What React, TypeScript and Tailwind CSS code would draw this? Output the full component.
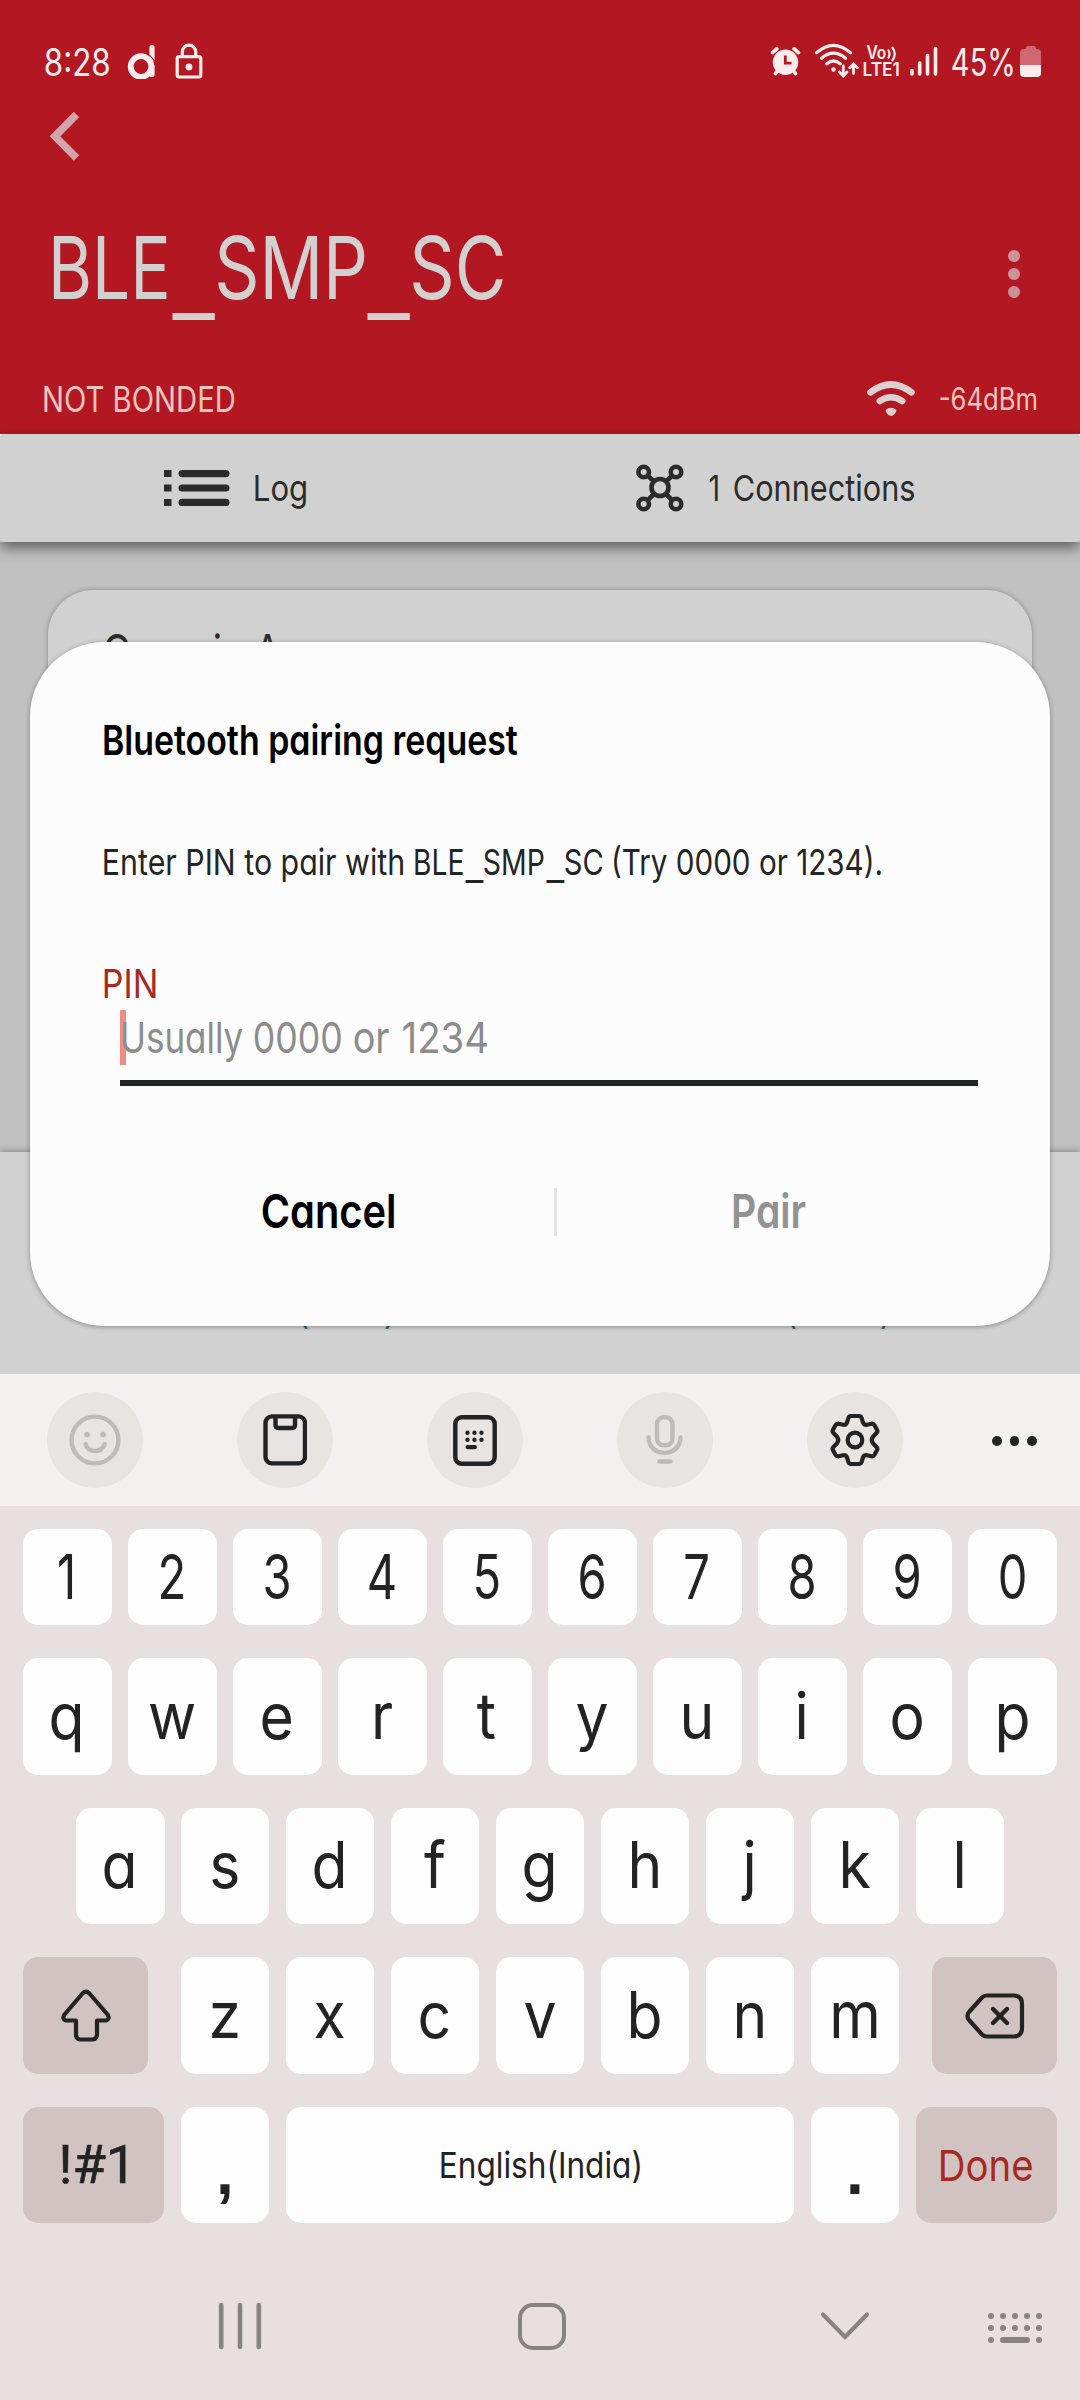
import { useLayoutEffect, useRef, useState, type ReactNode } from 'react';

/** Text condensed horizontally so that its ink fills exactly `w` pixels. */
function Fit({ w, children, className = '' }: { w: number; children: string; className?: string }) {
  const ref = useRef<HTMLSpanElement>(null);
  const [transform, setTransform] = useState('none');
  useLayoutEffect(() => {
    const el = ref.current;
    if (!el) return;
    const cs = getComputedStyle(el);
    const ctx = document.createElement('canvas').getContext('2d');
    if (!ctx) return;
    ctx.font = `${cs.fontWeight} ${cs.fontSize} ${cs.fontFamily}`;
    const m = ctx.measureText(children);
    const extra = el.offsetWidth - m.width;
    const ink = m.actualBoundingBoxLeft + m.actualBoundingBoxRight + extra;
    const s = w / ink;
    setTransform(`translateX(${m.actualBoundingBoxLeft * s + 0.4}px) scaleX(${s})`);
  }, [w, children]);
  return (
    <span className={`block shrink-0 ${className}`} style={{ width: w }}>
      <span ref={ref} className="inline-block origin-left whitespace-pre" style={{ transform }}>
        {children}
      </span>
    </span>
  );
}

function Key({ children, className = 'w-[88.5px] bg-[#fdfdfd]' }: { children: ReactNode; className?: string }) {
  return <div className={`flex h-full shrink-0 items-center justify-center rounded-[15px] ${className}`}>{children}</div>;
}

function Letter({ children }: { children: string }) {
  return (
    <Key>
      <span className="-mt-[2px] -ml-[1px] block scale-x-[0.92] text-[64px] leading-none">{children}</span>
    </Key>
  );
}

function StatusBar() {
  return (
    <div className="flex h-[98px] items-start pt-[43px] pl-[45px] text-[#ffecec]">
      <Fit w={64} className="text-[38px] leading-[38px]">8:28</Fit>
      <svg className="ml-[18px]" width="30" height="36" viewBox="0 0 30 36" fill="none" stroke="currentColor" strokeLinecap="round">
        <circle cx="14" cy="23.5" r="10.3" strokeWidth="5.8" />
        <path d="M25 4.6V16M25 23V31.5" strokeWidth="5.2" />
        <path d="M20 10.5Q25 13.500 27.4 18" stroke="#b31822" strokeWidth="1.2" />
      </svg>
      <svg className="ml-[18px]" width="28" height="36" viewBox="0 0 28 36" fill="none" stroke="currentColor" strokeWidth="3.2">
        <rect x="2.2" y="13.7" width="23.6" height="20.3" rx="2" />
        <path d="M7.3 13V8.8A6.7 6.7 0 0 1 20.7 8.8V13" />
        <circle cx="14" cy="24" r="3.4" fill="currentColor" stroke="none" />
      </svg>
      <svg className="ml-[567px] mt-[4px]" width="32" height="30" viewBox="0 0 32 30">
        <circle cx="15.5" cy="15.3" r="12.7" fill="currentColor" />
        <path d="M2.6 5.6L6.8 1.8M28.4 5.6L24.2 1.8M5.5 26.5L8 23M25.5 26.5L23 23" stroke="currentColor" strokeWidth="3.8" strokeLinecap="round" />
        <path d="M15.3 8.5V16.2H21.5" fill="none" stroke="#b31822" strokeWidth="2.8" />
      </svg>
      <svg className="ml-[13px]" width="44" height="36" viewBox="0 0 44 36" fill="none" stroke="currentColor" strokeWidth="3.2" strokeLinecap="round">
        <path d="M1.5 9.8Q18.5 -5.2 35.5 9.8M6.5 15.2Q18.5 5.2 30.5 15.2M11.8 20.8Q18.5 15.2 25.2 20.8" />
        <circle cx="18.5" cy="26.5" r="2.2" fill="currentColor" stroke="none" />
        <path d="M28.3 23V32.5M24.5 29L28.3 33L32 29M38.5 30.5V21.5M34.8 24.8L38.5 21L42.3 24.8" strokeWidth="2.8" />
      </svg>
      <div className="ml-[4px] flex h-[36px] w-[38px] flex-col font-semibold">
        <div className="flex pl-[3px]">
          <Fit w={20} className="mt-[1px] text-[18px] leading-[18px]">Vo</Fit>
          <svg className="mt-[3px]" width="12" height="16" viewBox="0 0 12 16" fill="none" stroke="currentColor" strokeWidth="2.2">
            <path d="M2 3.5Q5 8 2 12.5M6 1Q11.5 8 6 15" />
          </svg>
        </div>
        <Fit w={36} className="-mt-[1px] text-[18px] leading-[18px]">LTE1</Fit>
      </div>
      <svg className="ml-[9px] mt-[3px]" width="28" height="31" viewBox="0 0 28 31" stroke="currentColor" strokeWidth="3.6" strokeLinecap="round">
        <path d="M2 24.5V28M9.7 17V28M17.5 9.5V28M25.5 2.5V28" />
      </svg>
      <Fit w={61} className="ml-[14px] text-[38px] leading-[38px]">45%</Fit>
      <div className="ml-[7px] mt-[3px] flex w-[21px] flex-col items-center">
        <div className="h-[3px] w-[10px] rounded-t-[2px] bg-[#cf6870]" />
        <div className="h-[16px] w-full rounded-t-[4px] bg-[#cf6870]" />
        <div className="h-[12px] w-full rounded-b-[4px] bg-[#ffecec]" />
      </div>
    </div>
  );
}

function Header() {
  return (
    <header className="h-[434px] bg-[#b31822] text-[#d3d0d0]">
      <StatusBar />
      <svg className="mt-[13px] ml-[49px]" width="32" height="51" viewBox="0 0 32 51" fill="none" stroke="#d0a5ac" strokeWidth="7.6">
        <path d="M27.5 3.5L6 25.3L27.5 47" />
      </svg>
      <div className="mt-[56px] flex h-[100px] items-center pl-[53px]">
        <div className="flex text-[87px] leading-[100px]">
          <Fit w={113}>BLE</Fit>
          <Fit w={43} className="ml-[6px] translate-y-[14px]">_</Fit>
          <Fit w={147} className="ml-[2px]">SMP</Fit>
          <Fit w={43} className="ml-[3px] translate-y-[14px]">_</Fit>
          <Fit w={90} className="ml-[2px]">SC</Fit>
        </div>
        <div className="mt-[11px] ml-[506px] flex flex-col gap-[6px]">
          <i className="size-3 rounded-full bg-[#cb9298]" />
          <i className="size-3 rounded-full bg-[#cb9298]" />
          <i className="size-3 rounded-full bg-[#cb9298]" />
        </div>
      </div>
      <div className="mt-[61px] flex h-[40px] items-center pl-[44px]">
        <Fit w={190} className="text-[36px] leading-[40px] text-[#ecc4be]">NOT BONDED</Fit>
        <svg className="ml-[633px]" width="48" height="36" viewBox="0 0 48 36" fill="none" stroke="#dcd0d1" strokeLinecap="round" strokeWidth="6.6">
          <path d="M3.5 11.3Q24 -4.3 44.5 11.3M12.8 20Q24 12.5 35.2 20" />
          <path d="M18.5 29Q24 24.5 29.500 29Q28.500 34 24 35Q19.500 34 18.500 29Z" fill="#dcd0d1" stroke="none" />
        </svg>
        <Fit w={96} className="ml-[25px] text-[31px] leading-[40px] text-[#ecc4be]">-64dBm</Fit>
      </div>
    </header>
  );
}

function Tabs() {
  return (
    <div className="relative z-10 flex h-[108px] items-center rounded-[4px] bg-[#d1d1d1] pl-[164px] text-[36px] leading-[40px] text-[#2b2b2b] shadow-[0_6px_14px_rgba(0,0,0,0.5)]">
      <svg width="66" height="38" viewBox="0 0 66 38" fill="currentColor">
        <rect y="1" width="7.500" height="7" /><rect y="15.500" width="7.500" height="7" /><rect y="30" width="7.500" height="7" />
        <rect x="14.500" y="1" width="51" height="7.200" rx="3.600" /><rect x="14.500" y="15.400" width="51" height="7.200" rx="3.600" /><rect x="14.500" y="29.800" width="51" height="7.200" rx="3.600" />
      </svg>
      <Fit w={51} className="ml-[25px]">Log</Fit>
      <svg className="ml-[330px]" width="48" height="48" viewBox="0 0 48 48" fill="none" stroke="currentColor" strokeWidth="4.600">
        <circle cx="24" cy="23.500" r="8.500" />
        <circle cx="7.700" cy="8" r="5.300" /><circle cx="40" cy="8" r="5.300" />
        <circle cx="7.700" cy="40" r="5.300" /><circle cx="40" cy="40" r="5.300" />
        <path d="M11.500 11.500L18 17.500M36.300 11.500L30 17.500M11.500 36.300L18 30M36.300 36.300L30 30" />
      </svg>
      <Fit w={9} className="ml-[25px]">1</Fit>
      <Fit w={180} className="ml-[16px]">Connections</Fit>
    </div>
  );
}

function Dialog() {
  return (
    <section className="absolute top-[642px] left-[30px] z-20 flex h-[684px] w-[1020px] flex-col rounded-[74px] bg-[#fcfcfc] text-[#232524] shadow-[0_1px_5px_rgba(0,0,0,0.35)]">
      <Fit w={413} className="mt-[76px] ml-[74px] text-[41px] leading-[44px] font-semibold text-black">Bluetooth pairing request</Fit>
      <div className="mt-[80px] ml-[74px] flex text-[36px] leading-[40px]">
        <Fit w={299}>Enter PIN to pair with</Fit>
        <Fit w={48} className="ml-[12px]">BLE</Fit>
        <Fit w={18} className="ml-[2px] translate-y-[5px]">_</Fit>
        <Fit w={60} className="ml-[1px]">SMP</Fit>
        <Fit w={18} className="ml-[2px] translate-y-[5px]">_</Fit>
        <Fit w={37} className="ml-[1px]">SC</Fit>
        <Fit w={268} className="ml-[11px]">(Try 0000 or 1234).</Fit>
      </div>
      <Fit w={51} className="mt-[80px] ml-[74px] text-[40px] leading-[44px] text-[#a8291f]">PIN</Fit>
      <div className="mt-[4px] ml-[90px] flex h-[76px] w-[858px] items-start border-b-[6px] border-[#232524] text-[43px] leading-[55px] text-[#8c8c8c]">
        <div className="h-[55px] w-[6px] bg-[#ec8d84]" />
        <Fit w={121} className="-ml-[4px]">Usually</Fit>
        <Fit w={87} className="ml-[11px]">0000</Fit>
        <Fit w={35} className="ml-[13px]">or</Fit>
        <Fit w={84} className="ml-[14px]">1234</Fit>
      </div>
      <div className="mt-[100px] flex h-[50px] items-center text-[47px] leading-[50px]">
        <Fit w={132} className="ml-[232px] font-semibold text-black">Cancel</Fit>
        <div className="mt-[2px] ml-[160px] h-[48px] w-[3px] bg-[#e4e4e4]" />
        <Fit w={72} className="ml-[176px] font-semibold text-[#929292]">Pair</Fit>
      </div>
    </section>
  );
}

function Content() {
  return (
    <main className="flex h-[832px] flex-col bg-[#c1c1c1]">
      <div className="mx-[48px] mt-[48px] h-[562px] overflow-hidden rounded-t-[45px] bg-[#d1d1d1] pt-[42px] pl-[56px] shadow-[0_0_5px_rgba(0,0,0,0.3)]">
        <Fit w={280} className="text-[48px] leading-[40px] text-[#2b2b2b]">Generic Access</Fit>
      </div>
      <div className="relative flex h-[222px] bg-[#d1d1d1] pt-[147px] pl-[298px] text-[30px] leading-[30px] shadow-[0_-2px_6px_rgba(0,0,0,0.25)]">
        <span className="flex w-[97px] justify-between text-[#27628a]"><span>(</span><span>)</span></span>
        <span className="ml-[391px] flex w-[105px] justify-between text-[#555]"><span>(</span><span>)</span></span>
      </div>
    </main>
  );
}

function Round({ children }: { children: ReactNode }) {
  return <div className="flex size-24 items-center justify-center rounded-full bg-[#e8e4e2]">{children}</div>;
}

function Toolbar() {
  return (
    <div className="relative flex h-[132px] items-center gap-[94px] bg-[#f4f0ef] pl-[47px] text-[#232323]">
      <Round>
        <svg width="52" height="52" viewBox="0 0 52 52" fill="none" stroke="#bfbbb9" strokeWidth="4.400" strokeLinecap="round">
          <circle cx="26" cy="26" r="23.400" />
          <path d="M16.500 30Q18.500 37 26 37Q33.500 37 35.700 30" />
          <circle cx="18" cy="20.600" r="2.900" fill="#bfbbb9" stroke="none" /><circle cx="34" cy="20.600" r="2.900" fill="#bfbbb9" stroke="none" />
        </svg>
      </Round>
      <Round>
        <svg width="44" height="52" viewBox="0 0 44 52" fill="none" stroke="currentColor" strokeWidth="4.400">
          <rect x="2.500" y="2.400" width="39.500" height="47" rx="6.500" />
          <path d="M12.500 3V11Q12.500 14 15.500 14H29Q32 14 32 11V3" />
        </svg>
      </Round>
      <Round>
        <svg width="44" height="52" viewBox="0 0 44 52" fill="currentColor">
          <rect x="2.300" y="3.300" width="39.400" height="46.500" rx="6.500" fill="none" stroke="currentColor" strokeWidth="4.400" />
          {[14.5, 21.5, 28.5].map((x) => (
            <g key={x}><circle cx={x} cy="18.800" r="2.200" /><circle cx={x} cy="25.800" r="2.200" /></g>
          ))}
          <rect x="12.500" y="31" width="11.500" height="4.200" rx="2.100" />
        </svg>
      </Round>
      <Round>
        <svg width="40" height="52" viewBox="0 0 40 52" fill="none" stroke="#bfbbb9" strokeWidth="4.400" strokeLinecap="round">
          <rect x="12" y="3.300" width="15.500" height="28" rx="6.500" />
          <path d="M3.500 23.500C4 44 35 44 35.500 23.500M14.500 47.500H25.500" />
        </svg>
      </Round>
      <Round>
        <svg width="52" height="54" viewBox="-26 -27 52 54" fill="none" stroke="currentColor" strokeWidth="4.200" strokeLinejoin="round">
          <path d="M-4 -24H4Q6 -24 6.600 -22L8 -17.500Q9 -14.800 12 -15.300L16.500 -16.300Q18.500 -16.500 19.500 -14.800L22 -10.300Q23 -8.500 21.500 -7L18 -3.300Q15.500 0 18 3.300L21.500 7Q23 8.500 22 10.300L19.500 14.800Q18.500 16.500 16.500 16.300L12 15.300Q9 14.800 8 17.500L6.600 22Q6 24 4 24H-4Q-6 24 -6.600 22L-8 17.500Q-9 14.800 -12 15.300L-16.500 16.300Q-18.500 16.500 -19.500 14.800L-22 10.300Q-23 8.500 -21.500 7L-18 3.300Q-15.500 0 -18 -3.300L-21.500 -7Q-23 -8.500 -22 -10.300L-19.500 -14.800Q-18.500 -16.500 -16.500 -16.300L-12 -15.300Q-9 -14.800 -8 -17.500L-6.600 -22Q-6 -24 -4 -24Z" />
          <circle r="7.300" />
        </svg>
      </Round>
      <div className="-ml-[5px] mt-[2px] flex gap-[8px]">
        <i className="size-[9.5px] rounded-full bg-current" />
        <i className="size-[9.5px] rounded-full bg-current" />
        <i className="size-[9.5px] rounded-full bg-current" />
      </div>
    </div>
  );
}

function Keyboard() {
  return (
    <div className="flex h-[894px] flex-col bg-[#e7dfe0] pt-[23px] text-[#232323]">
      <div className="flex h-[96px] justify-between px-[23px]">
        {'1234567890'.split('').map((d) => (
          <Key key={d}><span className="-ml-[1px] block scale-x-[0.76] text-[62px] leading-none">{d}</span></Key>
        ))}
      </div>
      <div className="mt-[33px] flex h-[117px] justify-between px-[23px]">
        {'qwertyuiop'.split('').map((c) => <Letter key={c}>{c}</Letter>)}
      </div>
      <div className="mt-[33px] flex h-[116px] justify-between px-[76px]">
        {'asdfghjkl'.split('').map((c) => <Letter key={c}>{c}</Letter>)}
      </div>
      <div className="mt-[33px] flex h-[117px] justify-between px-[23px]">
        <Key className="w-[125px] bg-[#d2c3c3]">
          <svg width="52" height="54" viewBox="0 0 52 54" fill="none" stroke="currentColor" strokeWidth="4.200" strokeLinejoin="round">
            <path d="M22.500 4.500Q26 1 29.500 4.500L47.500 25.500Q50.500 30 46 31.500H37V45.500Q37 50 32.500 50.500H20Q16 50 16 45.500V31.500H6Q1.500 30 4.500 25.500Z" />
          </svg>
        </Key>
        <div className="flex w-[719px] justify-between">
          {'zxcvbnm'.split('').map((c) => <Letter key={c}>{c}</Letter>)}
        </div>
        <Key className="w-[125px] bg-[#d2c3c3]">
          <svg width="60" height="48" viewBox="0 0 60 48" fill="none" stroke="currentColor" strokeWidth="4.200" strokeLinejoin="round" strokeLinecap="round">
            <path d="M22 3.500H49Q57 4 57 12V36Q57 44 49 44.500H22Q19 44.500 17 42.500L4 28Q.8 24 4 20L17 5.500Q19 3.500 22 3.500Z" />
            <path d="M28 17L42 31M42 17L28 31" strokeWidth="4.400" />
          </svg>
        </Key>
      </div>
      <div className="mt-[33px] flex h-[116px] justify-between px-[23px]">
        <Key className="w-[141px] bg-[#d2c3c3]">
          <Fit w={64} className="font-['Roboto',sans-serif] text-[54px] leading-[54px] [-webkit-text-stroke:0.6px_currentColor]">!#1</Fit>
        </Key>
        <Key>
          <span className="mt-[14px] block font-['Liberation_Sans',sans-serif] text-[64px] leading-none font-bold">,</span>
        </Key>
        <Key className="w-[508px] bg-[#fdfdfd]">
          <Fit w={199} className="text-[36px] leading-[40px]">English(India)</Fit>
        </Key>
        <Key>
          <span className="mt-[14px] block font-['Liberation_Sans',sans-serif] text-[64px] leading-none font-bold">.</span>
        </Key>
        <Key className="w-[141px] bg-[#d2c3c3]">
          <Fit w={91} className="-ml-[2px] text-[43px] leading-[44px] text-[#a8291f]">Done</Fit>
        </Key>
      </div>
      <nav className="mt-[77px] flex h-[52px] items-center pl-[218px] text-[#878384]">
        <svg width="44" height="48" viewBox="0 0 44 48" stroke="currentColor" strokeWidth="4.600" strokeLinecap="round">
          <path d="M3.200 3V45M22 3V45M40.800 3V45" />
        </svg>
        <div className="ml-[256px] h-[47px] w-[48px] rounded-[15px] border-[4.5px] border-current" />
        <svg className="ml-[254px]" width="50" height="30" viewBox="0 0 50 30" fill="none" stroke="currentColor" strokeWidth="4.200" strokeLinecap="round">
          <path d="M3 3.500L25 26L47 3.500" />
        </svg>
        <svg className="mt-[4px] ml-[117px]" width="56" height="32" viewBox="0 0 56 32" fill="currentColor">
          {[4, 16, 28, 40, 52].map((x) => (
            <g key={x}><circle cx={x} cy="4" r="3" /><circle cx={x} cy="16" r="3" /></g>
          ))}
          <circle cx="4" cy="28" r="3" /><circle cx="52" cy="28" r="3" />
          <rect x="13" y="25" width="30" height="6" rx="3" />
        </svg>
      </nav>
    </div>
  );
}

export default function App() {
  return (
    <div className="relative h-[2400px] w-[1080px] overflow-hidden font-['Inter',sans-serif] [font-feature-settings:'cv11']">
      <Header />
      <Tabs />
      <Content />
      <Toolbar />
      <Keyboard />
      <Dialog />
    </div>
  );
}
